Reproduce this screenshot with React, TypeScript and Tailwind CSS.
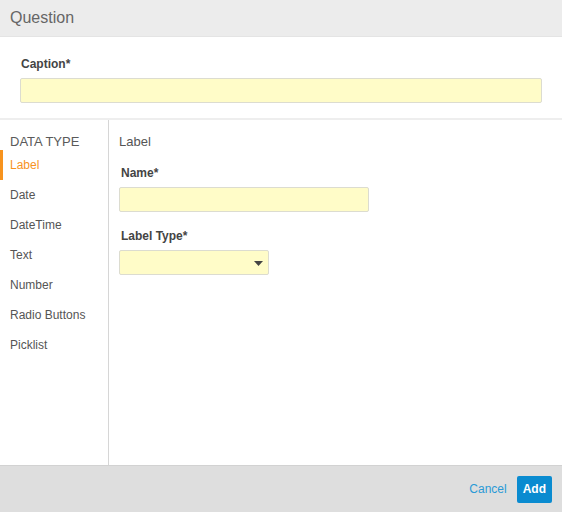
import React from 'react';

// 데이터 타입 목록
const types = ['Label', 'Date', 'DateTime', 'Text', 'Number', 'Radio Buttons', 'Picklist'];

export default function App() {
  return (
    <div
      className="flex h-[512px] w-[562px] flex-col bg-white text-[#555]"
      style={{ fontFamily: '"Liberation Sans", Arial, sans-serif' }}
    >
      {/* 헤더 */}
      <div className="flex h-[37px] shrink-0 items-center border-b border-[#e4e4e4] bg-[#ececec] px-[10px]">
        <span className="text-[16px] text-[#666]">Question</span>
      </div>

      {/* 캡션 */}
      <div className="shrink-0 border-b-2 border-[#eeeeee] px-5 pb-[15px] pt-[19px]">
        <label className="mb-[6px] block pl-px text-[12px] font-bold leading-[16px] text-[#444]">Caption*</label>
        <input className="block h-[25px] w-full rounded-[2px] border border-[#dcdcd0] bg-[#fffcc8] outline-none" />
      </div>

      {/* 본문 */}
      <div className="flex flex-1">
        <div className="w-[109px] shrink-0 border-r border-[#d6d6d6] pt-[14px]">
          <div className="pl-[10px] text-[13px] leading-[16px] text-[#5a5a5a]">DATA TYPE</div>
          {types.map((t, i) => (
            <div
              key={t}
              className={
                i === 0
                  ? 'flex h-[30px] items-center border-l-[3px] border-[#f7931e] pl-[7px] text-[12px] text-[#f7931e]'
                  : 'flex h-[30px] items-center pl-[10px] text-[12px] text-[#555]'
              }
            >
              {t}
            </div>
          ))}
        </div>

        <div className="flex-1 pl-[10px] pt-[14px]">
          <div className="text-[13px] leading-[16px] text-[#555]">Label</div>
          <label className="mt-[15px] block pl-[2px] text-[12px] font-bold leading-[16px] text-[#444]">Name*</label>
          <input className="mt-[6px] block h-[25px] w-[250px] rounded-[2px] border border-[#dcdcd0] bg-[#fffcc8] outline-none" />
          <label className="mt-[16px] block pl-[2px] text-[12px] font-bold leading-[16px] text-[#444]">Label Type*</label>
          <div className="relative mt-[6px] h-[25px] w-[150px] rounded-[2px] border border-[#dcdcd0] bg-[#fffcc8]">
            <svg className="absolute right-[5px] top-[10px]" width="9" height="5" viewBox="0 0 9 5">
              <path d="M0 0h9L4.5 5z" fill="#444" />
            </svg>
          </div>
        </div>
      </div>

      {/* 푸터 */}
      <div className="flex h-[47px] shrink-0 items-center justify-end gap-[10px] border-t border-[#d2d2d2] bg-[#dedede] pr-[10px]">
        <button className="text-[12px] text-[#2a9ad6]">Cancel</button>
        <button className="h-[27px] rounded-[2px] bg-[#0a8bd0] px-[6px] text-[12px] font-bold text-white">Add</button>
      </div>
    </div>
  );
}
